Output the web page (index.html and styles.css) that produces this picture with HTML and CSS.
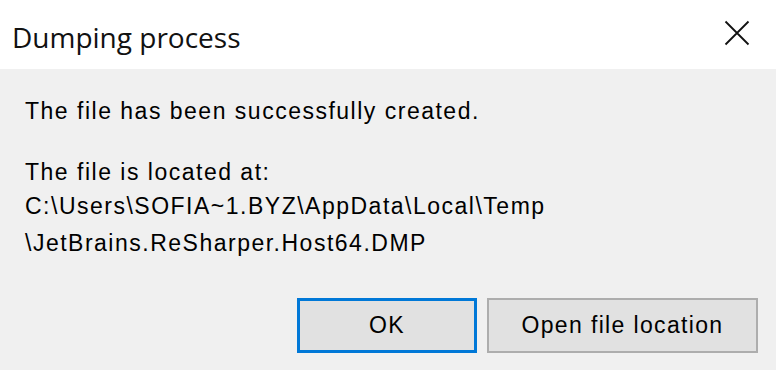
FILE: index.html
```html
<!DOCTYPE html>
<html lang="en">
  <head>
    <meta charset="UTF-8" />
    <title>Dumping process</title>
    <link rel="stylesheet" href="styles.css">
  </head>
  <body>
    <div class="dialog">
      <div class="titlebar">
        <span class="title">Dumping process</span>
        <svg class="close" width="26" height="26" viewBox="0 0 26 26">
          <path d="M1.5 1.5 L24.5 24.5 M24.5 1.5 L1.5 24.5" stroke="#111" stroke-width="1.8" fill="none" />
        </svg>
      </div>

      <div class="content">
        <p class="message">The file has been successfully created.</p>
        <p class="label">The file is located at:</p>
        <p class="path">C:\Users\SOFIA~1.BYZ\AppData\Local\Temp<br>\JetBrains.ReSharper.Host64.DMP</p>
      </div>

      <div class="buttons">
        <button class="btn btn-default">OK</button>
        <button class="btn btn-wide">Open file location</button>
      </div>
    </div>
  </body>
</html>
```

FILE: styles.css
```css
* {
  padding: 0;
  margin: 0;
  box-sizing: border-box;
}
html {
  font-family: "Liberation Sans", Arial, sans-serif;
}
body {
  background-color: #f0f0f0;
  width: 776px;
  height: 370px;
  overflow: hidden;
}
.dialog {
  display: flex;
  flex-direction: column;
  height: 370px;
}
.titlebar {
  display: flex;
  justify-content: space-between;
  align-items: flex-start;
  height: 69px;
  background-color: #ffffff;
  padding: 0 26px 0 12px;
}
.title {
  font-family: "Open Sans", "Noto Sans", sans-serif;
  font-size: 28px;
  line-height: 32px;
  padding-top: 21px;
  color: #111;
}
.close {
  margin-top: 20px;
}
.content {
  flex: 1;
  padding: 29px 25px 0;
  font-size: 23px;
  letter-spacing: 1.5px;
  line-height: 26px;
  color: #000;
}
.message {
  margin-bottom: 35px;
}
.label {
  margin-bottom: 8px;
}
.path {
  line-height: 37px;
  margin-top: -5px;
}
.buttons {
  display: flex;
  justify-content: flex-end;
  gap: 10px;
  padding: 0 18px 17px;
}
.btn {
  font-family: "Liberation Sans", Arial, sans-serif;
  font-size: 23px;
  letter-spacing: 1.35px;
  color: #000;
  height: 55px;
  background-color: #e1e1e1;
  border: 2px solid #adadad;
}
.btn-default {
  width: 180px;
  border: 3px solid #0078d7;
}
.btn-wide {
  width: 271px;
}
```
